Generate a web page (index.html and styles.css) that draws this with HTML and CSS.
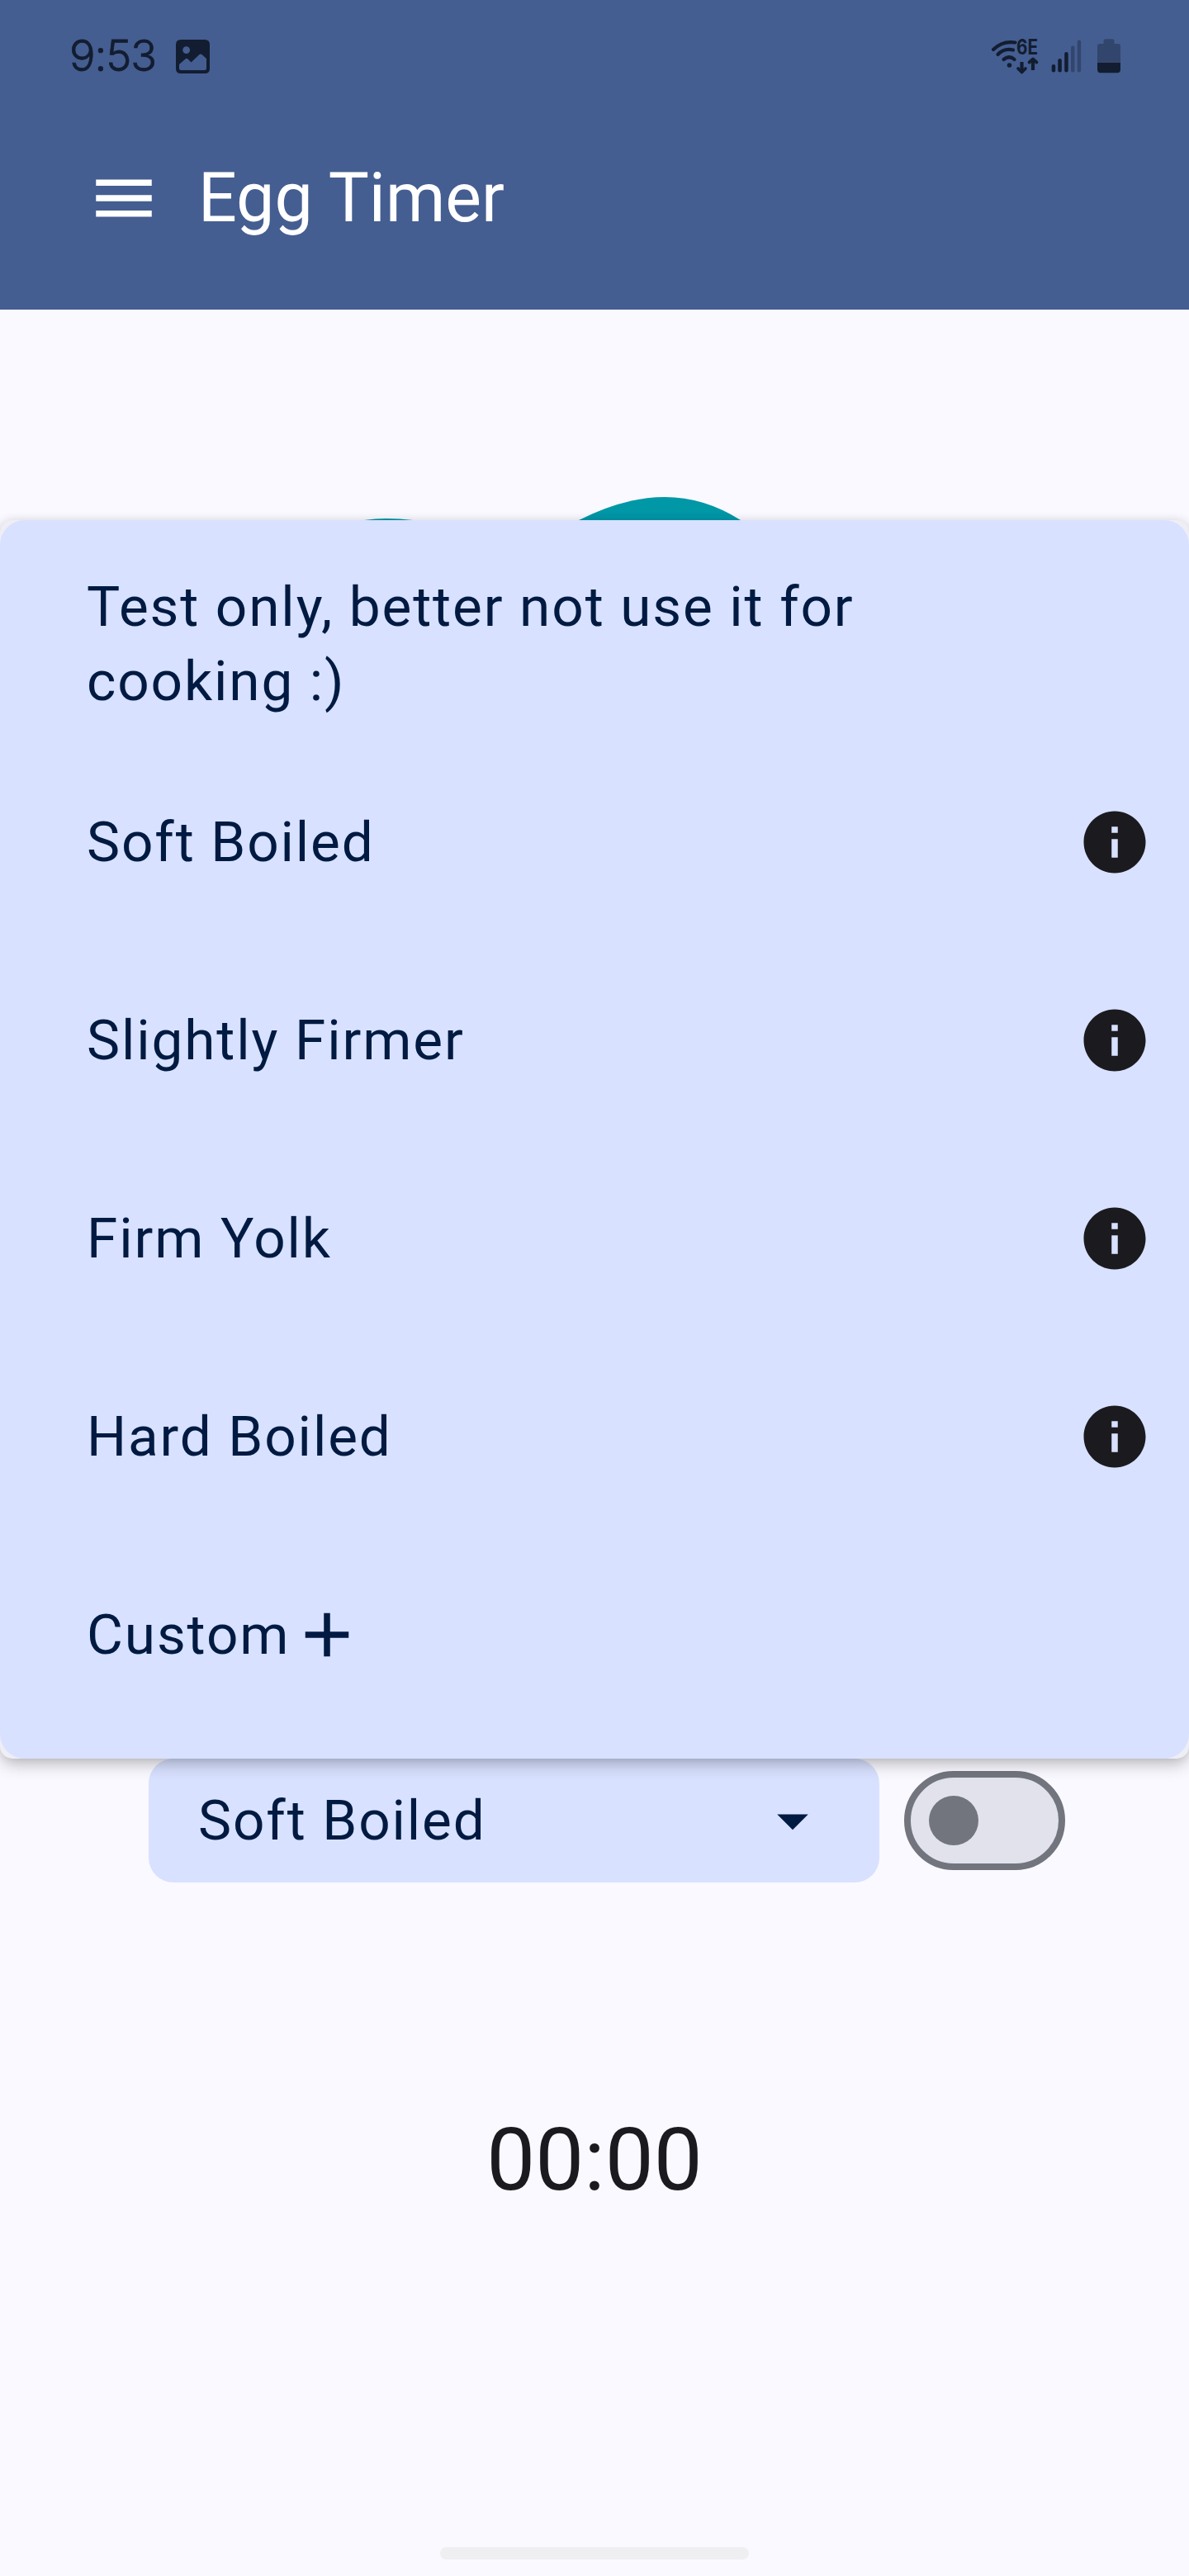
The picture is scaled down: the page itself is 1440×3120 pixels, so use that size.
FILE: index.html
```html
<!DOCTYPE html>
<html lang="en">
<head>
<meta charset="utf-8">
<title>Egg Timer</title>
<link rel="stylesheet" href="styles.css">
</head>
<body>
<div class="app">
  <header class="top">
    <div class="status">
      <span class="clock">9:53</span>
      <svg class="photo" viewBox="0 0 41 41"><path fill="#131d31" fill-rule="evenodd" d="M6 0H35Q41 0 41 6V35Q41 41 35 41H6Q0 41 0 35V6Q0 0 6 0ZM12.600 8.200A4.400 4.400 0 1 0 12.700 17A4.400 4.400 0 1 0 12.600 8.200ZM4 30V34.500Q4 37 6.500 37H34.500Q37 37 37 34.500V23L31.500 18Q30 17 28.500 18L18.500 27.500L14.500 23.500Q13 22.200 11.500 23.500Z"/></svg>
      <svg class="signals" viewBox="0 -10 160 56">
        <g fill="none" stroke="#131d31" stroke-width="4.200" stroke-linecap="round">
          <path d="M4 14Q15 3 30.500 5.500M9.500 20Q17 12 28 14.500M16.500 26Q23.500 20.500 29.500 26"/>
          <path stroke-linecap="butt" d="M38.500 29V42M52 39V26"/>
          <path stroke-linejoin="round" stroke-width="3.700" d="M34 37L38.500 41.500L43 37M47.500 29.500L52 25.500L56.500 29.500"/>
        </g>
        <circle cx="23.500" cy="33" r="2.800" fill="#131d31"/>
        <text class="band" x="32" y="20" textLength="26" lengthAdjust="spacingAndGlyphs">6E</text>
        <g fill="#131d31"><rect x="74.700" y="32" width="4.500" height="9.500" rx="2.200"/><rect x="82.300" y="25" width="4.500" height="16.500" rx="2.200"/><rect x="90.200" y="17" width="4.500" height="24.500" rx="2.200"/></g>
        <g fill="#32466d"><rect x="98" y="9.500" width="4.500" height="32" rx="2.200"/><rect x="105.700" y="2.500" width="4.500" height="39" rx="2.200"/><path d="M130 10Q130 7 133 7H137.500V4Q137.500 1.300 140 1.300H148Q150.500 1.300 150.500 4V7H155Q158 7 158 10V31H130Z"/></g>
        <path fill="#131d31" d="M130 30H158V38Q158 42.300 154 42.300H134Q130 42.300 130 38Z"/>
      </svg>
    </div>
    <div class="bar">
      <svg class="icon" viewBox="0 0 24 24"><path fill="#fff" d="M3 18h18v-2H3v2zm0-5h18v-2H3v2zm0-7v2h18V6H3z"/></svg>
      <h1 class="title">Egg Timer</h1>
    </div>
  </header>
  <main class="main">
    <svg class="art" viewBox="0 0 1440 60"><path fill="#0097a7" d="M701 40Q756 12 805 12Q853 12 897 40V60H701ZM441 40Q455 38 468 38Q484 38 500 40V60H441Z"/></svg>
    <div class="controls">
      <div class="select"><span>Soft Boiled</span><svg class="icon" viewBox="0 0 24 24"><path fill="#001a41" d="M7 10l5 5 5-5z"/></svg></div>
      <div class="switch"><div class="thumb"></div></div>
    </div>
    <div class="timer">00:00</div>
    <div class="menu">
      <ul class="list">
        <li class="item"><span class="note">Test only, better not use it for cooking :)</span></li>
        <li class="item"><span>Soft Boiled</span><svg class="icon" viewBox="0 0 24 24"><use href="#info"/></svg></li>
        <li class="item"><span>Slightly Firmer</span><svg class="icon" viewBox="0 0 24 24"><use href="#info"/></svg></li>
        <li class="item"><span>Firm Yolk</span><svg class="icon" viewBox="0 0 24 24"><use href="#info"/></svg></li>
        <li class="item"><span>Hard Boiled</span><svg class="icon" viewBox="0 0 24 24"><use href="#info"/></svg></li>
        <li class="item custom"><span>Custom</span><svg class="icon" viewBox="0 0 24 24"><path fill="#001a41" d="M19 13h-6v6h-2v-6H5v-2h6V5h2v6h6v2z"/></svg></li>
      </ul>
    </div>
  </main>
  <div class="gesture"></div>
</div>
<svg width="0" height="0" class="defs"><defs><path id="info" fill="#1b1b1f" d="M12 2C6.480 2 2 6.480 2 12s4.480 10 10 10 10-4.480 10-10S17.520 2 12 2zm1 15h-2v-6h2v6zm0-8h-2V7h2v2z"/></defs></svg>
</body>
</html>
```
FILE: styles.css
```css
* { box-sizing: border-box; }
body { margin: 0; background: #faf9ff; }
.defs { display: none; }
.app {
  width: 1440px;
  height: 3120px;
  display: flex;
  flex-direction: column;
  overflow: hidden;
  background: #faf9ff;
  color: #001a41;
  font: 67.5px/90px Roboto, sans-serif;
  letter-spacing: 1.875px;
}
.top { height: 375px; background: #455e91; }
.status { height: 135px; display: flex; align-items: flex-start; padding: 0 81px 0 84px; }
.clock { font: 300 52.5px/60px Inter, sans-serif; letter-spacing: -1.1px; color: #131d31; width: 129px; padding-top: 37px; -webkit-text-stroke: 0.8px #131d31; }
.photo { width: 41px; height: 41px; margin-top: 48px; }
.signals { width: 160px; height: 56px; margin: 36px 0 0 auto; overflow: visible; }
.band { font: 700 25px Inter, sans-serif; letter-spacing: 0; fill: #131d31; }
.bar { height: 210px; display: flex; align-items: center; gap: 45px; padding-left: 105px; }
.title { margin: 0; padding-bottom: 2px; font-size: 82.5px; line-height: 105px; font-weight: 400; letter-spacing: 0; color: #fff; }
.icon { width: 90px; height: 90px; flex: none; display: block; }
.main { position: relative; flex: 1; display: flex; flex-direction: column; padding-top: 215px; }
.art { width: 1440px; height: 60px; display: block; }
.controls { display: flex; align-items: center; gap: 30px; padding-left: 180px; margin-top: 1480px; }
.select { width: 885px; height: 150px; border-radius: 30px; background: #d8e1ff; display: flex; align-items: center; justify-content: space-between; padding: 0 60px; }
.switch { width: 195px; height: 120px; border: 8px solid #72757e; border-radius: 60px; background: #e1e2ec; display: flex; align-items: center; padding-left: 22px; }
.thumb { width: 60px; height: 60px; border-radius: 50%; background: #72757e; }
.timer { margin-top: 266px; font-size: 105px; line-height: 142px; letter-spacing: 0; text-align: center; color: #1b1b1f; }
.menu {
  position: absolute;
  left: 0;
  top: 255px;
  width: 1440px;
  height: 1500px;
  border-radius: 15px;
  background: #eeeef4;
  box-shadow: 0 9px 20px -2px rgba(0, 0, 0, 0.24), 0 0 12px rgba(0, 0, 0, 0.1);
}
.list { margin: 0; padding: 30px 45px 30px 105px; height: 1500px; list-style: none; border-radius: 30px; background: #d8e1ff; }
.item { height: 240px; display: flex; align-items: center; justify-content: space-between; }
.note { width: 1000px; }
.custom { justify-content: flex-start; }
.gesture { width: 374px; height: 15px; margin: 0 auto 20px; border-radius: 8px; background: #efeff1; }
```
